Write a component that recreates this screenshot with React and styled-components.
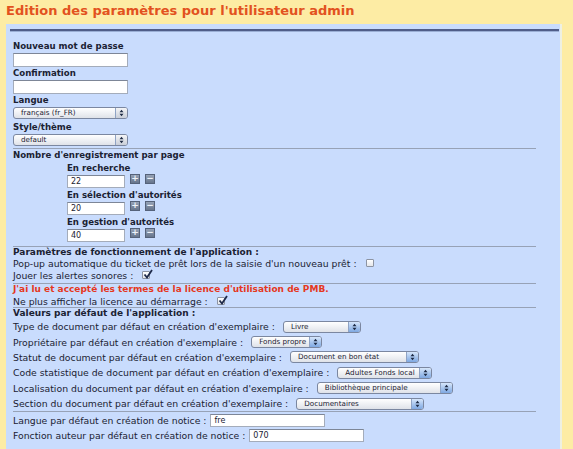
import styled, { createGlobalStyle } from 'styled-components';

const GlobalStyle = createGlobalStyle`
  html, body { margin: 0; padding: 0; background: #fdeca4; }
  body {
    font-family: "DejaVu Sans", Verdana, sans-serif;
    color: #1b2233;
  }
`;

const Page = styled.div`
  width: 573px;
  height: 449px;
  overflow: hidden;
`;

const Title = styled.h1`
  margin: 0;
  height: 24px;
  padding: 3px 0 0 6px;
  box-sizing: border-box;
  font-size: 13px;
  line-height: 16px;
  font-weight: bold;
  color: #e2521e;
`;

const Panel = styled.div`
  margin-left: 6px;
  width: 556px;
  height: 425px;
  box-sizing: border-box;
  padding: 5px 1px 0 4px;
  background: #c9dcfd;
  border-right: 2px solid #eef0e2;
`;

const TopRule = styled.div`
  height: 2px;
  background: #4f5d88;
  border-bottom: 1px solid #9aaed4;
  margin-bottom: 8px;
`;

const Form = styled.div`
  width: 523px;
  padding-left: 3px;
`;

const Block = styled.div`
  padding-bottom: ${p => p.$pad || 0}px;
  border-top: ${p => (p.$rule ? '1px solid #97a2b6' : 'none')};
`;

const Label = styled.div`
  font-size: ${p => p.$size || 8.6}px;
  font-weight: bold;
  line-height: ${p => p.$lh || 13}px;
  color: ${p => (p.$red ? '#e5381d' : '#1b2233')};
  white-space: nowrap;
`;

const Indent = styled.div`
  padding-left: 54px;
`;

const TextBox = styled.input`
  display: block;
  box-sizing: border-box;
  width: ${p => p.$w}px;
  height: ${p => p.$h || 14}px;
  margin: 0;
  padding: 0 0 0 3px;
  border: 1px solid #a4acba;
  border-top-color: #7d8697;
  background: #fff;
  font-family: "DejaVu Sans", Verdana, sans-serif;
  font-size: 8px;
  color: #1b2233;
  outline: none;
  flex-shrink: 0;
`;

const SelectBox = styled.div`
  display: flex;
  align-items: stretch;
  box-sizing: border-box;
  width: ${p => p.$w}px;
  height: 12px;
  margin-bottom: ${p => p.$mb || 0}px;
  border: 1px solid #7b87a0;
  border-radius: 3px;
  background: linear-gradient(#ffffff, #eceef2 60%, #dfe2e8);
  overflow: hidden;
  flex-shrink: 0;
`;

const SelectText = styled.span`
  flex: 1;
  padding-left: 7px;
  font-size: 7.2px;
  line-height: 10px;
  white-space: nowrap;
  overflow: hidden;
`;

const SelectArrow = styled.span`
  width: 11px;
  display: flex;
  align-items: center;
  justify-content: center;
  border-left: 1px solid #8fa3c4;
  background: ${p => (p.$grey ? 'linear-gradient(#f4f5f7, #c9ced8)' : 'linear-gradient(#d6e6fb, #7ea8e2)')};
`;

const NumberRow = styled.div`
  display: flex;
  align-items: flex-start;
  gap: 5px;
  margin-bottom: 1px;
`;

const StepButton = styled.span`
  width: 10px;
  height: 10px;
  margin-top: -1px;
  box-sizing: border-box;
  border: 1px solid #55627a;
  background: linear-gradient(#95a2b6, #67758c);
  color: #eef2f8;
  font-size: 9px;
  line-height: 7px;
  text-align: center;
  font-weight: bold;
`;

const Row = styled.div`
  display: flex;
  align-items: center;
  gap: ${p => p.$gap || 9}px;
  height: ${p => p.$h || 12}px;
  font-size: 9.3px;
  white-space: nowrap;
`;

const CheckBox = styled.span`
  position: relative;
  display: inline-block;
  width: 8px;
  height: 8px;
  box-sizing: border-box;
  border: 1px solid #8d94a2;
  border-radius: 1px;
  background: linear-gradient(#ffffff, #e4e6ea);
`;

const CheckMark = styled.svg`
  position: absolute;
  left: 0;
  top: -3px;
`;

const Arrows = () => (
  <svg width="5" height="8" viewBox="0 0 5 8">
    <path d="M0.5 3.2 L2.5 0.8 L4.5 3.2 Z M0.5 4.8 L2.5 7.2 L4.5 4.8 Z" fill="#1d2a44" />
  </svg>
);

function Select({ value, width, grey, mb }) {
  return (
    <SelectBox $w={width} $mb={mb}>
      <SelectText>{value}</SelectText>
      <SelectArrow $grey={grey}>
        <Arrows />
      </SelectArrow>
    </SelectBox>
  );
}

function Check({ checked }) {
  return (
    <CheckBox>
      {checked && (
        <CheckMark width="10" height="10" viewBox="0 0 10 10">
          <path d="M1.5 5.5 L4 8.5 L9 1" stroke="#1e2a4a" strokeWidth="1.8" fill="none" />
        </CheckMark>
      )}
    </CheckBox>
  );
}

function NumberField({ label, value }) {
  return (
    <>
      <Label>{label}</Label>
      <NumberRow>
        <TextBox $w={58} $h={13} defaultValue={value} readOnly />
        <StepButton>+</StepButton>
        <StepButton>−</StepButton>
      </NumberRow>
    </>
  );
}

const defaults = [
  ['Type de document par défaut en création d\'exemplaire :', 'Livre', 78],
  ['Propriétaire par défaut en création d\'exemplaire :', 'Fonds propre', 71],
  ['Statut de document par défaut en création d\'exemplaire :', 'Document en bon état', 129],
  ['Code statistique de document par défaut en création d\'exemplaire :', 'Adultes Fonds local', 95],
  ['Localisation du document par défaut en création d\'exemplaire :', 'Bibliothèque principale', 136],
  ['Section du document par défaut en création d\'exemplaire :', 'Documentaires', 128],
];

export default function App() {
  return (
    <Page>
      <GlobalStyle />
      <Title>Edition des paramètres pour l'utilisateur admin</Title>
      <Panel>
        <TopRule />
        <Form>
          <Block>
            <Label>Nouveau mot de passe</Label>
            <TextBox $w={115} type="password" readOnly />
            <Label>Confirmation</Label>
            <TextBox $w={115} type="password" readOnly />
            <Label>Langue</Label>
            <Select value="français (fr_FR)" width={115} grey mb={2} />
            <Label>Style/thème</Label>
            <Select value="default" width={115} grey mb={2} />
          </Block>

          <Block $rule $pad={3}>
            <Label $lh={13}>Nombre d'enregistrement par page</Label>
            <Indent>
              <NumberField label="En recherche" value="22" />
              <NumberField label="En sélection d'autorités" value="20" />
              <NumberField label="En gestion d'autorités" value="40" />
            </Indent>
          </Block>

          <Block $rule $pad={2}>
            <Label $lh={10} $size={9}>Paramètres de fonctionnement de l'application :</Label>
            <Row>
              Pop-up automatique du ticket de prêt lors de la saisie d'un nouveau prêt :
              <Check />
            </Row>
            <Row>
              Jouer les alertes sonores :
              <Check checked />
            </Row>
          </Block>

          <Block $rule>
            <Label $lh={11} $size={9} $red>J'ai lu et accepté les termes de la licence d'utilisation de PMB.</Label>
            <Row>
              Ne plus afficher la licence au démarrage :
              <Check checked />
            </Row>
          </Block>

          <Block $rule>
            <Label $lh={11} $size={9}>Valeurs par défaut de l'application :</Label>
            {defaults.map(([text, value, width]) => (
              <Row key={text} $h={15.4} $gap={8}>
                {text}
                <Select value={value} width={width} />
              </Row>
            ))}
          </Block>

          <Block $rule>
            <Row $h={15.5} $gap={4}>
              Langue par défaut en création de notice :
              <TextBox $w={115} $h={13} defaultValue="fre" readOnly />
            </Row>
            <Row $h={15.5} $gap={4}>
              Fonction auteur par défaut en création de notice :
              <TextBox $w={115} $h={13} defaultValue="070" readOnly />
            </Row>
          </Block>
        </Form>
      </Panel>
    </Page>
  );
}
